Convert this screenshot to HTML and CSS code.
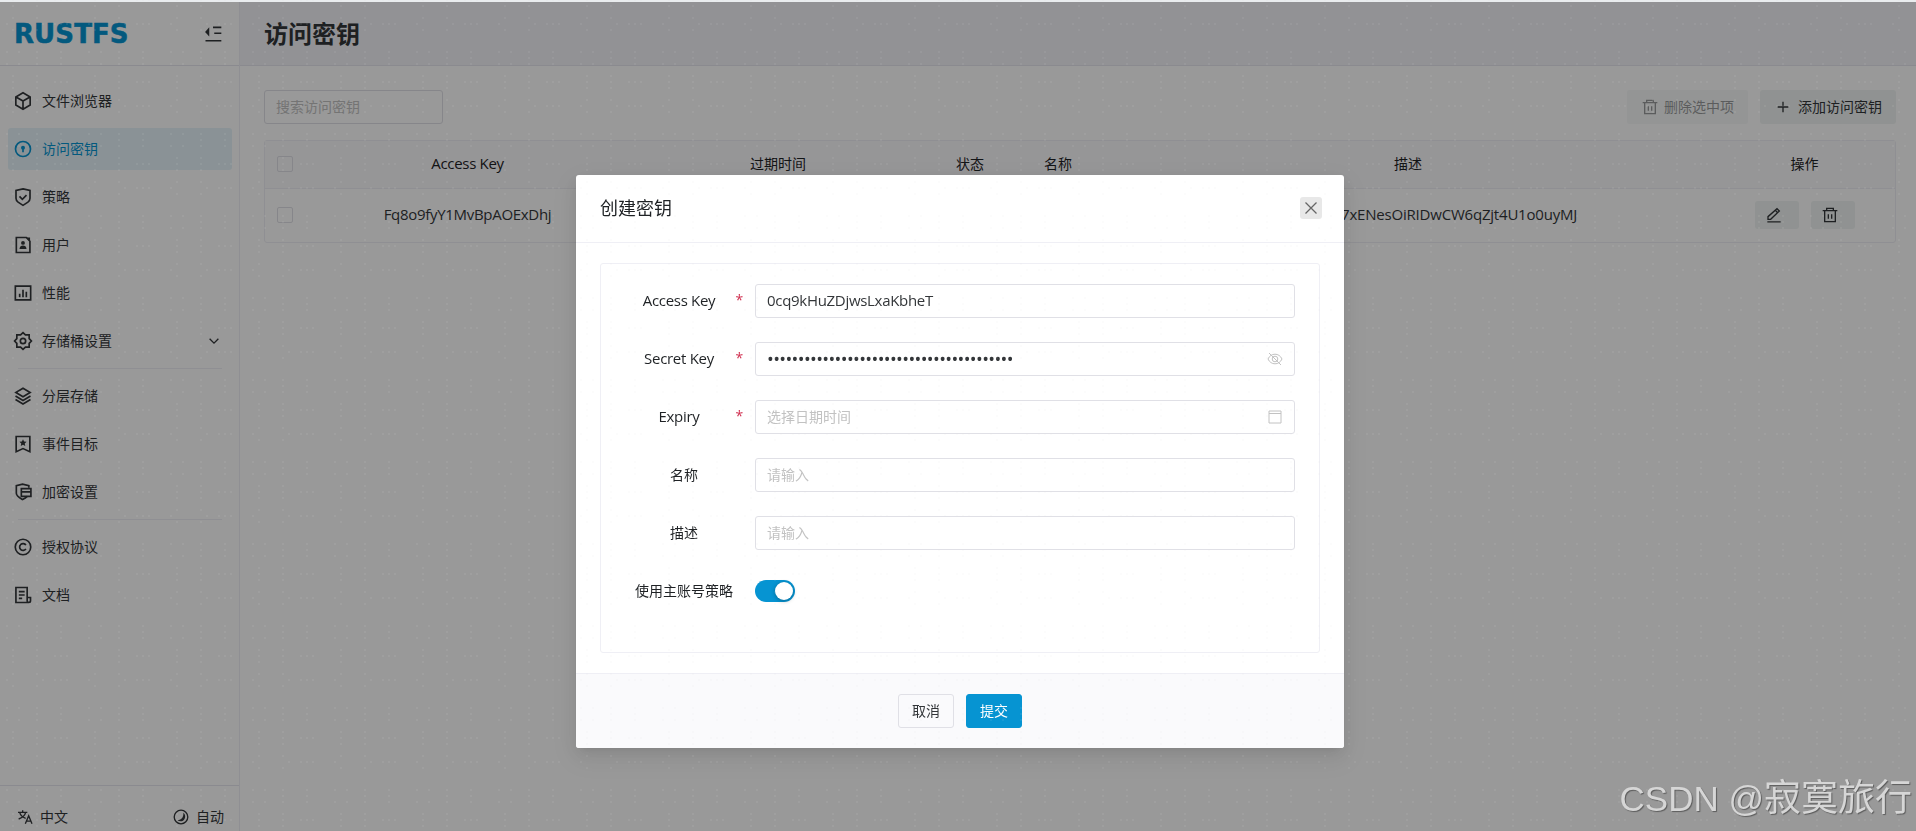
FILE: index.html
```html
<!DOCTYPE html>
<html lang="zh-CN">
<head>
    <meta charset="UTF-8">
    <meta name="viewport" content="width=device-width, initial-scale=1.0">
    <title>访问密钥 - RustFS</title>
    <link rel="stylesheet" href="styles.css">
</head>
<body>
    <div class="app">
        <aside class="sidebar">
            <div class="sidebar-header">
                <div class="logo">RUSTFS</div>
                <svg class="icon" viewBox="0 0 24 24"><path d="M12 4h10M13.500 11h8.500M3 20h19" fill="none" stroke="currentColor" stroke-width="1.9"/><path d="M7.500 4v11L2.500 9.500z" fill="currentColor" stroke="none"/></svg>
            </div>
            <nav class="menu">
                <a class="menu-item">
                    <svg class="icon" viewBox="0 0 24 24"><path d="M12 2.2l8.6 4.9v9.8L12 21.8l-8.6-4.9V7.1zM3.6 7.2L12 12l8.4-4.8M12 12v9.6"/></svg>
                    <span>文件浏览器</span>
                </a>
                <a class="menu-item active">
                    <svg class="icon" viewBox="0 0 24 24"><circle cx="12" cy="12" r="9"/><circle cx="12" cy="10.4" r="2.4" class="solid"/><path d="M12 11v5"/></svg>
                    <span>访问密钥</span>
                </a>
                <a class="menu-item">
                    <svg class="icon" viewBox="0 0 24 24"><path d="M12 2.2l8.4 2v9.3c0 2-1 3.600-2.500 4.700L12 22l-5.900-3.800c-1.500-1.100-2.500-2.700-2.500-4.700V4.200z"/><path d="M7.800 11.300l3.400 3.400 5-5"/></svg>
                    <span>策略</span>
                </a>
                <a class="menu-item">
                    <svg class="icon" viewBox="0 0 24 24"><path d="M16 3H4v18h16.300V7.500z"/><path d="M15.500 3l5 5V3z" class="solid"/><circle cx="12" cy="9.500" r="2.300" class="solid"/><path d="M7.800 16.800c0-5.600 8.400-5.600 8.400 0z" class="solid"/></svg>
                    <span>用户</span>
                </a>
                <a class="menu-item">
                    <svg class="icon" viewBox="0 0 24 24"><path d="M2.800 3.800h18.400v16.400H2.800zM8 13v4M12 8v9M16 10.500V17"/></svg>
                    <span>性能</span>
                </a>
                <a class="menu-item">
                    <svg class="icon" viewBox="0 0 24 24"><path d="M12 1.900l2.900 2.700h4.500v4.500l2.700 2.900-2.700 2.900v4.500h-4.500L12 22.100l-2.900-2.700H4.600v-4.500L1.900 12l2.700-2.900V4.600h4.500z"/><circle cx="12" cy="12" r="3.200"/></svg>
                    <span>存储桶设置</span>
                    <svg class="arrow" viewBox="0 0 16 16"><path d="M3 5.500l5 5 5-5"/></svg>
                </a>
                <div class="menu-divider"></div>
                <a class="menu-item">
                    <svg class="icon" viewBox="0 0 24 24"><path d="M12 2.600l8.600 5.200L12 13 3.400 7.800zM3 12l9 5.400 9-5.400M3 16.200l9 5.400 9-5.400"/></svg>
                    <span>分层存储</span>
                </a>
                <a class="menu-item">
                    <svg class="icon" viewBox="0 0 24 24"><path d="M3.800 3h16.400v18.300L12 17.500l-8.200 3.800z"/><path d="M12 6.300l1.300 2.700 3 .4-2.200 2 .6 3-2.700-1.400-2.700 1.400.6-3-2.200-2 3-.4z" class="solid"/></svg>
                    <span>事件目标</span>
                </a>
                <a class="menu-item">
                    <svg class="icon" viewBox="0 0 24 24"><path d="M19 7V4.500L11.500 2.500 4 4.500v9c0 3.500 4 5.500 7.500 7.500 2-1 4-2.200 5.500-3.800"/><path d="M10 8h11.500v9.200H10zM10 11.800h11.500"/></svg>
                    <span>加密设置</span>
                </a>
                <div class="menu-divider"></div>
                <a class="menu-item">
                    <svg class="icon" viewBox="0 0 24 24"><circle cx="12" cy="12" r="9.300"/><path d="M15.500 9.800a4.100 4.100 0 1 0 0 4.400"/></svg>
                    <span>授权协议</span>
                </a>
                <a class="menu-item">
                    <svg class="icon" viewBox="0 0 24 24"><path d="M17 15V3H3.500v18H19a2 2 0 0 0 2-2v-4h-4v4a2 2 0 0 0 2 2M7 8h7M7 12h7M7 16h4"/></svg>
                    <span>文档</span>
                </a>
            </nav>
            <div class="sidebar-footer">
                <div class="footer-link">
                    <svg class="icon-sm" viewBox="0 0 24 24"><path d="M1.500 5h14M8.500 2v3M4 5c1 4 5 7.500 9 9M13 5c-1 4-5 8-10.500 10M12.500 22l5-12 5 12M14 18.300h7"/></svg>
                    <span>中文</span>
                </div>
                <div class="footer-link">
                    <svg class="icon-sm" viewBox="0 0 24 24"><circle cx="12" cy="12" r="10.200"/><path d="M15.500 5.500c3.500 2.500 3.500 7.500 1 10.500s-7 3-10 .5c7 0 9.500-5 9-11z" class="solid"/></svg>
                    <span>自动</span>
                </div>
            </div>
        </aside>

        <main class="main">
            <header class="page-header">
                <h1>访问密钥</h1>
            </header>
            <div class="content">
                <div class="toolbar">
                    <input class="input search" type="text" placeholder="搜索访问密钥">
                    <div class="toolbar-actions">
                        <button class="btn-soft" disabled>
                            <svg class="icon-sm" viewBox="0 0 24 24"><path d="M1 5.500h22M7 5.500V2h10v3.500M4 5.500V22h16V5.500M9.500 11v6.500M14.500 11v6.500"/></svg>
                            删除选中项
                        </button>
                        <button class="btn-soft add">
                            <svg class="icon-sm" viewBox="0 0 24 24"><path d="M12 4v16M4 12h16"/></svg>
                            添加访问密钥
                        </button>
                    </div>
                </div>
                <div class="table-wrap">
                    <table>
                        <colgroup>
                            <col class="col-check">
                            <col class="col-key">
                            <col class="col-expiry">
                            <col class="col-status">
                            <col class="col-name">
                            <col>
                            <col class="col-action">
                        </colgroup>
                        <thead>
                            <tr>
                                <th><span class="checkbox"></span></th>
                                <th class="latin">Access Key</th>
                                <th>过期时间</th>
                                <th>状态</th>
                                <th>名称</th>
                                <th>描述</th>
                                <th>操作</th>
                            </tr>
                        </thead>
                        <tbody>
                            <tr>
                                <td><span class="checkbox"></span></td>
                                <td class="latin">Fq8o9fyY1MvBpAOExDhj</td>
                                <td></td>
                                <td></td>
                                <td></td>
                                <td class="latin desc">7xENesOiRIDwCW6qZjt4U1o0uyMJ</td>
                                <td>
                                    <div class="row-actions">
                                        <button class="btn-soft small"><svg class="icon-sm" viewBox="0 0 24 24"><path d="M3 18.500v-4L16.500 2.500l3.500 3.500L7 18.500zM14 5l3.500 3.500M2 22.300h20"/></svg></button>
                                        <button class="btn-soft small"><svg class="icon-sm" viewBox="0 0 24 24"><path d="M1 5.500h22M7 5.500V2h10v3.500M4 5.500V22h16V5.500M9.500 11v6.500M14.500 11v6.500"/></svg></button>
                                    </div>
                                </td>
                            </tr>
                        </tbody>
                    </table>
                </div>
            </div>
        </main>
    </div>

    <div class="mask">
        <div class="modal">
            <div class="modal-header">
                <span>创建密钥</span>
                <button class="close">
                    <svg viewBox="0 0 22 22"><path d="M5.500 5.500l11 11M16.500 5.500l-11 11"/></svg>
                </button>
            </div>
            <div class="modal-body">
                <form class="form">
                    <div class="form-item">
                        <label class="latin"><span>Access Key</span><i>*</i></label>
                        <input class="input latin" type="text" value="0cq9kHuZDjwsLxaKbheT">
                    </div>
                    <div class="form-item">
                        <label class="latin"><span>Secret Key</span><i>*</i></label>
                        <div class="input with-icon">
                            <span class="dots">••••••••••••••••••••••••••••••••••••••••</span>
                            <svg viewBox="0 0 16 16"><path d="M1 8c1.500-3.200 4-4.800 7-4.800s5.500 1.600 7 4.800c-1.500 3.200-4 4.800-7 4.800S2.500 11.200 1 8z"/><circle cx="8" cy="8" r="2.800"/><path d="M2 2l12 12"/></svg>
                        </div>
                    </div>
                    <div class="form-item">
                        <label class="latin"><span>Expiry</span><i>*</i></label>
                        <div class="input with-icon">
                            <span class="placeholder">选择日期时间</span>
                            <svg viewBox="0 0 16 16"><path d="M2 2h12v12H2zM2 4.500h12"/></svg>
                        </div>
                    </div>
                    <div class="form-item">
                        <label><span>名称</span></label>
                        <input class="input" type="text" placeholder="请输入">
                    </div>
                    <div class="form-item">
                        <label><span>描述</span></label>
                        <input class="input" type="text" placeholder="请输入">
                    </div>
                    <div class="form-item">
                        <label><span>使用主账号策略</span></label>
                        <div class="switch"></div>
                    </div>
                </form>
            </div>
            <div class="modal-footer">
                <button class="btn">取消</button>
                <button class="btn primary">提交</button>
            </div>
        </div>
    </div>

    <!-- dotted pattern over the whole page -->
    <svg class="pattern">
        <defs>
            <pattern id="dots" width="82" height="82" patternUnits="userSpaceOnUse">
                <path d="M12 0h2v1h-2zM36 0h2v1h-2zM54 0h2v1h-2zM60 0h2v1h-2zM66 0h2v1h-2z
                    M12 81h2v1h-2zM36 81h2v1h-2zM54 81h2v1h-2zM60 81h2v1h-2zM66 81h2v1h-2z
                    M12 5h2v2h-2zM36 5h2v2h-2z
                    M12 17h2v2h-2zM36 17h2v2h-2z
                    M6 23h2v2h-2zM42 23h2v2h-2zM54 23h2v2h-2zM60 23h2v2h-2zM66 23h2v2h-2z
                    M12 29h2v2h-2zM36 29h2v2h-2z
                    M6 51h2v2h-2zM18 51h2v2h-2zM36 51h2v2h-2zM60 51h2v2h-2z
                    M36 57h2v2h-2zM60 57h2v2h-2z
                    M6 63h2v2h-2zM18 63h2v2h-2zM36 63h2v2h-2zM60 63h2v2h-2z
                    M12 75h2v2h-2zM36 75h2v2h-2z"/>
            </pattern>
        </defs>
        <rect width="100%" height="100%" fill="url(#dots)"/>
    </svg>
    <div class="watermark"><span>CSDN @</span>寂寞旅行</div>
</body>
</html>
```
FILE: styles.css
```css
* {
    box-sizing: border-box;
}
body {
    margin: 0;
    height: 100vh;
    overflow: hidden;
    background: #fff;
    color: #333639;
    font-family: "Open Sans", "Noto Sans CJK SC", sans-serif;
    font-size: 14px;
    line-height: 22px;
}
button, input {
    font: inherit;
    color: inherit;
    outline: none;
}
svg {
    fill: none;
    stroke: currentColor;
    stroke-width: 2;
    flex-shrink: 0;
}
.solid {
    fill: currentColor;
    stroke: none;
}
.icon {
    width: 20px;
    height: 20px;
}
.icon-sm {
    width: 16px;
    height: 16px;
}
.latin {
    font-size: 15px;
    letter-spacing: -0.3px;
}

.app {
    display: flex;
    height: 100vh;
    border-top: 2px solid #e9ecee;
}

/* sidebar */
.sidebar {
    width: 240px;
    display: flex;
    flex-direction: column;
    border-right: 1px solid #efeff5;
}
.sidebar-header {
    height: 64px;
    padding: 0 16px 0 14px;
    display: flex;
    align-items: center;
    justify-content: space-between;
    border-bottom: 1px solid #e6e6ee;
}
.logo {
    font-family: "DejaVu Sans", sans-serif;
    font-weight: bold;
    font-size: 26px;
    letter-spacing: 0.1px;
    color: #0694d2;
    -webkit-text-stroke: 0.5px #0694d2;
}
.menu {
    flex: 1;
    padding: 8px 7px 0 8px;
}
.menu-item {
    display: flex;
    align-items: center;
    height: 42px;
    margin-top: 6px;
    padding: 0 11px 0 5px;
    border-radius: 3px;
}
.menu-item span {
    flex: 1;
    margin-left: 9px;
}
.menu-item.active {
    background: rgba(6, 148, 210, 0.1);
    color: #0694d2;
}
.arrow {
    width: 14px;
    height: 14px;
    stroke-width: 1.5;
}
.menu-divider {
    height: 1px;
    margin: 6px 10px;
    background: #efeff5;
}
.sidebar-footer {
    height: 46px;
    padding: 18px 15px 0 17px;
    display: flex;
    justify-content: space-between;
    border-top: 1px solid #e6e6ee;
}
.footer-link {
    display: flex;
    align-items: center;
    gap: 7px;
    height: 26px;
}

/* main page */
.main {
    flex: 1;
}
.page-header {
    height: 64px;
    padding: 0 24px;
    display: flex;
    align-items: center;
    background: #f3f3f8;
    border-bottom: 1px solid #e6e6ee;
}
.page-header h1 {
    margin: 0;
    font-size: 24px;
}
.content {
    padding: 24px 20px 0 24px;
}
.toolbar {
    display: flex;
    justify-content: space-between;
    margin-bottom: 16px;
}
.toolbar-actions {
    display: flex;
    gap: 12px;
}
.input {
    display: block;
    height: 34px;
    padding: 0 11px 2px;
    border: 1px solid #e0e0e6;
    border-radius: 3px;
    background: #fff;
}
.input::placeholder, .placeholder {
    color: #c2c2c2;
}
.search {
    width: 179px;
}
.btn-soft {
    display: flex;
    align-items: center;
    gap: 6px;
    height: 34px;
    padding: 0 14px 0 15px;
    border: none;
    border-radius: 3px;
    background: #f0f4f3;
}
.btn-soft:disabled {
    opacity: 0.5;
}
.btn-soft.add {
    gap: 7px;
    padding: 0 14px 0 15px;
}
.btn-soft.small {
    width: 44px;
    height: 28px;
    padding: 0 0 0 11px;
}
.table-wrap {
    border: 1px solid #efeff5;
    border-radius: 3px;
}
table {
    width: 100%;
    table-layout: fixed;
    border-collapse: collapse;
}
th, td {
    padding: 0;
    text-align: center;
}
th {
    height: 47px;
    font-weight: normal;
    color: #1f2225;
    background: #fafafc;
    border-bottom: 1px solid #efeff5;
}
td {
    height: 54px;
    padding-bottom: 1px;
}
th.latin, td.latin {
    padding-bottom: 2px;
}
td.desc {
    padding-left: 239px;
    text-align: left;
    letter-spacing: -0.2px;
}
.col-check {
    width: 40px;
}
.col-key {
    width: 325px;
}
.col-expiry {
    width: 296px;
}
.col-status, .col-name {
    width: 88px;
}
.col-action {
    width: 181px;
}
.checkbox {
    display: block;
    width: 16px;
    height: 16px;
    margin: 0 auto;
    border: 1px solid #e0e0e6;
    border-radius: 2px;
}
.row-actions {
    display: flex;
    justify-content: center;
    gap: 12px;
}

/* modal */
.mask {
    position: fixed;
    top: 2px;
    left: 0;
    right: 0;
    bottom: 0;
    display: flex;
    justify-content: center;
    align-items: flex-start;
    padding: 173px 0 0 4px;
    background: rgba(0, 0, 0, 0.4);
}
.modal {
    width: 768px;
    border-radius: 3px;
    background: #fff;
    box-shadow: 0 3px 6px -4px rgba(0, 0, 0, 0.12), 0 6px 16px 0 rgba(0, 0, 0, 0.08), 0 9px 28px 8px rgba(0, 0, 0, 0.05);
}
.modal-header {
    height: 68px;
    padding: 0 22px 2px 24px;
    display: flex;
    align-items: center;
    justify-content: space-between;
    border-bottom: 1px solid #efeff5;
    font-size: 18px;
    color: #1f2225;
}
.close {
    width: 22px;
    height: 22px;
    padding: 0;
    border: none;
    border-radius: 3px;
    background: #e8e8e8;
    color: #666;
}
.close svg {
    display: block;
    stroke-width: 1.3;
}
.modal-body {
    padding: 20px 24px;
}
.form {
    padding: 20px 24px 44px;
    border: 1px solid #efeff5;
    border-radius: 3px;
    display: flex;
    flex-direction: column;
    gap: 24px;
}
.form-item {
    display: flex;
    align-items: center;
    height: 34px;
}
.form-item label {
    width: 118px;
    margin-right: 12px;
    display: flex;
    text-align: center;
    color: #1f2225;
}
.form-item label.latin {
    padding-bottom: 2px;
}
.form-item label span {
    flex: 1;
}
.form-item label i {
    width: 10px;
    font-size: 14px;
    font-style: normal;
    text-align: right;
    color: #d03050;
}
.form-item .input {
    flex: 1;
}
.input.with-icon {
    display: flex;
    align-items: center;
    justify-content: space-between;
    padding-bottom: 0;
}
.with-icon svg {
    width: 16px;
    height: 16px;
    color: #c2c2c2;
    stroke-width: 1;
}
.dots {
    font-size: 18px;
    letter-spacing: -0.62px;
}
.switch {
    width: 40px;
    height: 22px;
    padding: 2px;
    border-radius: 11px;
    background: #0694d2;
}
.switch::after {
    content: "";
    display: block;
    width: 18px;
    height: 18px;
    margin-left: auto;
    border-radius: 50%;
    background: #fff;
    box-shadow: 0 1px 4px rgba(0, 0, 0, 0.3);
}
.modal-footer {
    height: 75px;
    display: flex;
    justify-content: center;
    align-items: center;
    gap: 12px;
    border-top: 1px solid #efeff5;
    border-radius: 0 0 3px 3px;
    background: #fafafc;
}
.btn {
    width: 56px;
    height: 34px;
    padding: 0;
    border: 1px solid #e0e0e6;
    border-radius: 3px;
    background: #fafafc;
}
.btn.primary {
    border-color: #0694d2;
    background: #0694d2;
    color: #fff;
}

.pattern {
    position: fixed;
    top: 0;
    left: 0;
    width: 100%;
    height: 100%;
    fill: rgba(225, 225, 225, 0.085);
    stroke: none;
    pointer-events: none;
}
.watermark {
    position: fixed;
    right: 4px;
    bottom: 7px;
    font-family: "Noto Sans CJK SC", sans-serif;
    font-size: 37px;
    line-height: 50px;
    color: #d6d6d6;
    text-shadow: 1px 1px 1px rgba(0, 0, 0, 0.4);
}
.watermark span {
    font-family: "Liberation Sans", sans-serif;
    font-size: 35px;
}
```
